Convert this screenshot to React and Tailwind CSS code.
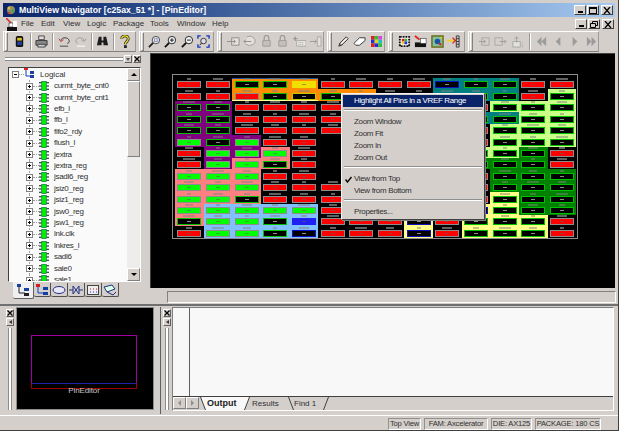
import { Fragment } from 'react';

const FONT = "font-['Liberation_Sans',Arial,sans-serif]";

const chipRows = [
  'nR nR oK oK oY nR nR nR nR tU tK tK nR nR',
  'nR nR oR oK oV oK oK nR nR tK tK tK nR lK',
  'pK pK nR nR nR nR nR nR nR nR nR lK lK lK',
  'pK pK nR nR nR nR nR nR nR nR tK tK lK lK',
  'pK pK nR nR nR nR nR nR nR nR nR lK lK lK',
  'pG pK pG nR nR nE nE nE nE nE nR lK lK lK',
  'nR pG pG sG nR nE nE nE nE nE lK lK dK nR',
  'nR pG sG sK nR nE nE nE nE nE dK dK dK nR',
  'sG sG sG nR nR nE nE nE nE nE nR dK dK dK',
  'sG sG sG nR nR nR nR nR nR nR nR dK dK dK',
  'sG sG sK nR nR nR nR nR nR nR nR yK dK dK',
  'sG bG bG bG bG nR nR nR nR nR yU yK dK dK',
  'sK bG bG bK bB nR nR nR yU nR yK yK yK nR',
  'nR bG bG bK bU nR nR nR yU nR yK yK yK nR',
];

const regionBg = {
  n: 'bg-black',
  o: 'bg-[#ff8c00]',
  p: 'bg-[#800080]',
  s: 'bg-[#ff8080]',
  b: 'bg-[#80c0ff]',
  t: 'bg-[#008080]',
  l: 'bg-[#ccff88]',
  d: 'bg-[#008000]',
  y: 'bg-[#ffff88]',
};

const pinStyle = {
  R: 'bg-[#ff0000] border-[#8c8c8c]',
  G: 'bg-[#00ff00] border-[#8c8c8c]',
  K: 'bg-black border-[#00c000]',
  U: 'bg-black border-[#1010c0]',
  V: 'bg-black border-[#c8c800]',
  Y: 'bg-[#f0e000] border-[#f0e000]',
  B: 'bg-[#2020f0] border-[#2020f0]',
};

const treeNets = [
  'curmt_byte_cnt0', 'curmt_byte_cnt1', 'efb_l', 'ffb_l', 'fifo2_rdy', 'flush_l', 'jextra',
  'jextra_reg', 'jsadl6_reg', 'jsiz0_reg', 'jsiz1_reg', 'jsw0_reg', 'jsw1_reg', 'lnk.clk',
  'lnkres_l', 'sadl6', 'sale0', 'sale1',
];

function Svg({ children, size = 13, view = 14 }) {
  return (
    <svg width={size} height={size} viewBox={`0 0 ${view} ${view}`} fill="none" className="shrink-0">
      {children}
    </svg>
  );
}

const Icons = {
  chip: () => (
    <Svg>
      <rect x="3" y="1" width="8" height="12" rx="2" fill="#111" />
      <rect x="4.5" y="3" width="5" height="3" fill="#e0c020" />
      <rect x="4.5" y="7" width="5" height="4" fill="#2040a0" />
    </Svg>
  ),
  printer: () => (
    <Svg>
      <path d="M4 1h6v4H4z" fill="#ddd" stroke="#444" />
      <path d="M1 6h12v5H1z" fill="#888" stroke="#333" />
      <path d="M3 10h8v3H3z" fill="#ccc" stroke="#444" />
    </Svg>
  ),
  undo: () => (
    <Svg>
      <path d="M3 6C4 2 11 2 12 6c.5 2-1 3-2 3" stroke="#333" strokeWidth="1" />
      <path d="M1 4l2 3 3-2" stroke="#c03030" />
      <path d="M2 12h9" stroke="#444" />
    </Svg>
  ),
  redo: () => (
    <Svg>
      <path d="M11 6C10 2 3 2 2 6c-.5 2 1 3 2 3" stroke="#9a9a9a" />
      <path d="M13 4l-2 3-3-2" stroke="#9a9a9a" />
      <path d="M3 12h9" stroke="#fff" />
    </Svg>
  ),
  binoculars: () => (
    <Svg>
      <path d="M3 2h3v4h2V2h3l2 9H8V8H6v3H1z" fill="#1c1c1c" />
    </Svg>
  ),
  help: () => (
    <Svg>
      <path d="M4 4c0-4 7-4 7 0 0 3-3 3-3 6" stroke="#222" strokeWidth="3" />
      <path d="M4 4c0-4 7-4 7 0 0 3-3 3-3 6" stroke="#f0e020" strokeWidth="1.4" />
      <rect x="6.5" y="11" width="3" height="3" fill="#222" />
    </Svg>
  ),
  zoomWindow: () => (
    <Svg>
      <circle cx="8.5" cy="5.5" r="4" fill="#e8e8e8" stroke="#444" />
      <path d="M5.5 8.5L1 13" stroke="#222" strokeWidth="2" />
      <path d="M7 4h3v3H7z" stroke="#2040a0" strokeDasharray="1 1" />
    </Svg>
  ),
  zoomIn: () => (
    <Svg>
      <circle cx="8.5" cy="5.5" r="4" fill="#f0f0f0" stroke="#222" />
      <path d="M5.5 8.5L1 13" stroke="#111" strokeWidth="2" />
      <path d="M6.5 5.5h4M8.5 3.5v4" stroke="#111" />
    </Svg>
  ),
  zoomOut: () => (
    <Svg>
      <circle cx="8.5" cy="5.5" r="4" fill="#f0f0f0" stroke="#222" />
      <path d="M5.5 8.5L1 13" stroke="#111" strokeWidth="2" />
      <path d="M6.5 5.5h4" stroke="#111" />
    </Svg>
  ),
  zoomFit: () => (
    <Svg>
      <path d="M1 4V1h3M10 1h3v3M13 10v3h-3M4 13H1v-3" stroke="#1030c0" strokeWidth="1.4" />
      <circle cx="7" cy="6.5" r="3" fill="#dde" stroke="#333" />
      <path d="M5 8.5L3 11" stroke="#222" />
    </Svg>
  ),
  boxIn: () => (
    <Svg>
      <path d="M5 3h8v8H5z" stroke="#8c8c8c" fill="#e4e0dc" />
      <path d="M0 7h9M7 5l2 2-2 2" stroke="#8c8c8c" />
    </Svg>
  ),
  boxOut: () => (
    <Svg>
      <path d="M4 2a6 5 0 1 1-1 8" stroke="#9c9c9c" fill="#e4e0dc" />
      <path d="M1 7h8M3 5L1 7l2 2" stroke="#8c8c8c" />
    </Svg>
  ),
  lock: () => (
    <Svg>
      <path d="M4.5 6V3a2.5 2.5 0 0 1 5 0v3" stroke="#9c9c9c" strokeWidth="1.4" />
      <path d="M3 6h8v6H3z" fill="#c4c0bc" stroke="#9c9c9c" />
    </Svg>
  ),
  plusGrid: () => (
    <Svg>
      <path d="M0 4h5M2.5 1.5v5" stroke="#8c8c8c" />
      <path d="M4 6h10v6H4z" fill="#ece8e4" stroke="#a8a8a8" />
      <path d="M6 8h1M8 8h1M10 8h1M6 10h1M8 10h1M10 10h1" stroke="#9c9c9c" />
    </Svg>
  ),
  arrowPanel: () => (
    <Svg>
      <path d="M1 7h7M6 5l2 2-2 2" stroke="#9c9c9c" />
      <path d="M9 2h4v10H9z" stroke="#a8a8a8" fill="#e4e0dc" />
    </Svg>
  ),
  pencil: () => (
    <Svg>
      <path d="M2 12l1-3 7-7 2 2-7 7z" fill="#f2f2f2" stroke="#222" />
      <path d="M3 9l2 2" stroke="#222" />
    </Svg>
  ),
  eraser: () => (
    <Svg>
      <path d="M1 9l6-6h6v3l-6 5H3z" fill="#fff" stroke="#333" />
    </Svg>
  ),
  palette: () => (
    <Svg view={6} size={11}>
      <path d="M0 0h2v2H0z" fill="#e02020" /><path d="M2 0h2v2H2z" fill="#30c030" /><path d="M4 0h2v2H4z" fill="#e040e0" />
      <path d="M0 2h2v2H0z" fill="#2030e0" /><path d="M2 2h2v2H2z" fill="#e0d020" /><path d="M4 2h2v2H4z" fill="#20c0c0" />
      <path d="M0 4h2v2H0z" fill="#e02020" /><path d="M2 4h2v2H2z" fill="#2030e0" /><path d="M4 4h2v2H4z" fill="#30c030" />
    </Svg>
  ),
  chipRing: () => (
    <Svg>
      <rect x="2" y="2" width="10" height="10" fill="#fff" stroke="#111" strokeWidth="2" strokeDasharray="2 1" />
      <rect x="4" y="4" width="3" height="3" fill="#e02020" />
      <rect x="7" y="4" width="3" height="3" fill="#30b030" />
      <rect x="4" y="7" width="3" height="3" fill="#e0d020" />
      <rect x="7" y="7" width="3" height="3" fill="#2030e0" />
    </Svg>
  ),
  pinRed: () => (
    <Svg>
      <path d="M1 1l5 4" stroke="#e02020" strokeWidth="2" />
      <rect x="1" y="8" width="12" height="5" fill="#111" />
      <rect x="7" y="4" width="6" height="5" fill="#fff" stroke="#333" strokeWidth=".6" />
    </Svg>
  ),
  greenBox: () => (
    <Svg>
      <rect x="1" y="1" width="12" height="12" fill="#80c0a0" stroke="#6a6a10" strokeWidth="1.5" />
      <circle cx="7" cy="7" r="3" fill="#2050a0" />
      <circle cx="10" cy="10" r="1.3" fill="#e02020" />
      <circle cx="11" cy="3" r="1" fill="#e0d020" />
    </Svg>
  ),
  yellowArrow: () => (
    <Svg>
      <path d="M0 6h8" stroke="#f0d020" strokeWidth="2" />
      <path d="M6 3l3 3-3 3" stroke="#e02020" strokeWidth="1.4" />
      <path d="M10 1h3v12h-3zM10 4h3M10 7h3M10 10h3" stroke="#333" />
    </Svg>
  ),
  dashIn: () => (
    <Svg>
      <path d="M4 3h8v8H4z" stroke="#a8a8a8" />
      <path d="M1 7h7M6 5l2 2-2 2" stroke="#9c9c9c" />
    </Svg>
  ),
  dashOut: () => (
    <Svg>
      <path d="M1 3h8v8H1z" stroke="#a8a8a8" />
      <path d="M6 7h7M11 5l2 2-2 2" stroke="#9c9c9c" />
    </Svg>
  ),
  tray: () => (
    <Svg>
      <path d="M2 7h8v6H2z" fill="#e4e0dc" stroke="#a8a8a8" />
      <path d="M6 8V2M4 4l2-2 2 2" stroke="#a0a0a0" />
      <path d="M12 8v6" stroke="#b8b8b8" />
    </Svg>
  ),
  first: () => (
    <Svg><path d="M7 2L2 7l5 5zM12 2L7 7l5 5z" fill="#9c9c9c" /></Svg>
  ),
  prev: () => (
    <Svg><path d="M9 2L4 7l5 5z" fill="#9c9c9c" /></Svg>
  ),
  next: () => (
    <Svg><path d="M5 2l5 5-5 5z" fill="#9c9c9c" /></Svg>
  ),
  last: () => (
    <Svg><path d="M2 2l5 5-5 5zM7 2l5 5-5 5z" fill="#9c9c9c" /></Svg>
  ),
};

function NetIcon() {
  return (
    <svg width="10" height="10" viewBox="0 0 11 11" className="shrink-0">
      <path d="M0 2h3M0 5.5h3M0 9h3M8 2h3M8 5.5h3M8 9h3" stroke="#111" strokeWidth="1.2" />
      <rect x="3" y="0.5" width="5" height="10" fill="#00f000" stroke="#064" strokeWidth=".7" />
    </svg>
  );
}

function LogicalIcon() {
  return (
    <svg width="11" height="12" viewBox="0 0 11 12" className="shrink-0">
      <path d="M2 1v8h5" stroke="#1040c0" fill="none" />
      <rect x="0" y="0" width="4" height="3" fill="#e02020" />
      <rect x="6" y="4" width="4" height="3" fill="#2040a0" />
      <rect x="6" y="8" width="4" height="3" fill="#2040a0" />
    </svg>
  );
}

function AppGlyph() {
  return (
    <svg width="12" height="12" viewBox="0 0 12 12" className="shrink-0">
      <circle cx="6" cy="6" r="4" fill="#909060" />
      <circle cx="4" cy="4" r="1.5" fill="#e0c040" />
      <circle cx="8" cy="7" r="1.5" fill="#40a060" />
      <circle cx="4" cy="9" r="1.3" fill="#c04040" />
    </svg>
  );
}

function MenuGlyph() {
  return (
    <svg width="12" height="13" viewBox="0 0 12 13" className="shrink-0">
      <path d="M0 0l5 5" stroke="#e02020" strokeWidth="1.5" />
      <rect x="3" y="5" width="4" height="4" fill="#fff" stroke="#222" strokeWidth=".6" />
      <rect x="1" y="9" width="10" height="4" fill="#111" />
      <rect x="7" y="3" width="4" height="6" fill="#fff" />
    </svg>
  );
}

function WinButton({ kind }) {
  return (
    <div className="flex h-[10px] w-[12px] items-center justify-center border border-t-white border-l-white border-r-[#404040] border-b-[#404040] bg-[#d4cfcb]">
      {kind === 'min' && <div className="mt-[4px] h-[2px] w-[5px] bg-black" />}
      {kind === 'max' && <div className="h-[7px] w-[8px] border border-t-2 border-black" />}
      {kind === 'restore' && (
        <svg width="8" height="7" viewBox="0 0 8 7"><path d="M2.5 2V.5h5v4H6M.5 2.5h5v4h-5z" stroke="#000" fill="none" /></svg>
      )}
      {kind === 'close' && (
        <svg width="8" height="7" viewBox="0 0 8 7"><path d="M1 0l6 7M7 0L1 7" stroke="#000" strokeWidth="1.3" /></svg>
      )}
    </div>
  );
}

function Band({ width, children }) {
  return (
    <div className={`flex h-[21px] items-center border-t border-l border-b border-r border-t-white border-l-white border-r-[#9a9a9a] border-b-[#808080] ${width}`}>
      <div className="ml-[1px] mr-[2px] h-[19px] w-[3px] shrink-0 border border-t-white border-l-white border-r-[#808080] border-b-[#808080]" />
      {children}
    </div>
  );
}

function TB({ icon, className = '' }) {
  const Ico = Icons[icon];
  return (
    <div className={`flex w-[16.5px] shrink-0 items-center justify-center ${className}`}>
      <Ico />
    </div>
  );
}

function Sep({ className = 'w-[6px]' }) {
  return (
    <div className={`flex shrink-0 justify-center ${className}`}>
      <div className="h-[17px] w-[2px] border-l border-r border-l-[#9a9a9a] border-r-white" />
    </div>
  );
}

function Toolbar() {
  return (
    <div className="flex h-[22px] shrink-0 gap-[3px] pl-[3px]">
      <Band width="w-[133px]">
        <TB icon="chip" className="ml-[1px]" />
        <Sep />
        <TB icon="printer" />
        <Sep />
        <TB icon="undo" />
        <TB icon="redo" />
        <Sep className="w-[5px]" />
        <TB icon="binoculars" />
        <Sep />
        <TB icon="help" />
      </Band>
      <Band width="w-[75px]">
        <TB icon="zoomWindow" />
        <TB icon="zoomIn" />
        <TB icon="zoomOut" />
        <TB icon="zoomFit" />
      </Band>
      <Band width="w-[107px]">
        <TB icon="boxIn" className="ml-[1px]" />
        <TB icon="boxOut" />
        <TB icon="lock" />
        <TB icon="lock" />
        <TB icon="plusGrid" />
        <TB icon="arrowPanel" />
      </Band>
      <Band width="w-[58px]">
        <TB icon="pencil" className="ml-[1px]" />
        <TB icon="eraser" />
        <TB icon="palette" />
      </Band>
      <Band width="w-[77px]">
        <TB icon="chipRing" className="ml-[1px]" />
        <TB icon="pinRed" />
        <TB icon="greenBox" />
        <TB icon="yellowArrow" />
      </Band>
      <Band width="w-[131px]">
        <TB icon="dashIn" className="ml-[1px]" />
        <TB icon="dashOut" />
        <TB icon="tray" />
        <Sep className="w-[8px]" />
        <TB icon="first" />
        <TB icon="prev" />
        <TB icon="next" />
        <TB icon="last" />
      </Band>
    </div>
  );
}

function Expander({ minus }) {
  return (
    <div className="relative z-10 flex h-[7px] w-[7px] shrink-0 items-center justify-center border border-[#808080] bg-white">
      <div className="h-px w-[3px] bg-black" />
      {!minus && <div className="absolute h-[3px] w-px bg-black" />}
    </div>
  );
}

function TreeRow({ label }) {
  return (
    <div className="relative flex h-[11.42px] items-center pl-[17px]">
      <div className="absolute inset-y-0 left-[20px] border-l border-dotted border-[#a0a0a0]" />
      <Expander />
      <div className="w-[6px] border-t border-dotted border-[#a0a0a0]" />
      <div className="mr-[5px]"><NetIcon /></div>
      <span className="whitespace-nowrap text-[8px] leading-none tracking-[-0.3px] text-[#303030]">{label}</span>
    </div>
  );
}

function ScrollArrow({ up }) {
  return (
    <div className="flex h-[13px] w-[13px] shrink-0 items-center justify-center border border-t-white border-l-white border-r-[#808080] border-b-[#808080] bg-[#d4cfcb]">
      <div className={`h-0 w-0 border-x-[3px] border-x-transparent ${up ? 'border-b-[3px] border-b-black' : 'border-t-[3px] border-t-black'}`} />
    </div>
  );
}

function GripButton({ children }) {
  return (
    <div className="flex h-[8px] w-[8px] items-center justify-center border border-t-white border-l-white border-r-[#606060] border-b-[#606060] bg-[#d4cfcb]">
      {children}
    </div>
  );
}

function CloseGlyph() {
  return <svg width="6" height="6" viewBox="0 0 6 6"><path d="M.5.5l5 5M5.5.5l-5 5" stroke="#000" strokeWidth="1.2" /></svg>;
}

function TreeTab({ active, children }) {
  return (
    <div className={active
      ? 'flex h-[17px] w-[21px] items-center justify-center rounded-b-[2px] border-r border-b border-r-[#606060] border-b-[#606060] bg-[#f0f0f0]'
      : 'mt-px flex h-[14px] w-[17px] items-center justify-center rounded-b-[2px] border-r border-b border-r-[#505050] border-b-[#505050] bg-[#d4cfcb]'}>
      {children}
    </div>
  );
}

function LeftDock() {
  return (
    <div className="flex w-[150px] shrink-0 flex-col pl-[3px]">
      <div className="flex h-[12px] items-center pl-[2px] pr-[2px]">
        <div className="h-[4px] w-[118px] border-y border-y-[#8c8c8c] bg-white" />
        <div className="ml-[1px] flex gap-[1px]">
          <GripButton><div className="h-0 w-0 border-x-[2.5px] border-t-[3px] border-x-transparent border-t-[#555]" /></GripButton>
          <GripButton><CloseGlyph /></GripButton>
        </div>
      </div>
      <div className="ml-[5px] mt-[2px] flex h-[215px] w-[133px] border border-t-[#404040] border-l-[#404040] border-r-white border-b-white">
        <div className="min-w-0 flex-1 overflow-hidden bg-[#fafafa] pt-px">
          <div className="relative flex h-[11.42px] items-center pl-[3px]">
            <Expander minus />
            <div className="w-[5px] border-t border-dotted border-[#a0a0a0]" />
            <div className="mr-[5px] mt-[-3px]"><LogicalIcon /></div>
            <span className="text-[8px] leading-none text-[#303030]">Logical</span>
          </div>
          {treeNets.map(net => <TreeRow key={net} label={net} />)}
        </div>
        <div className="flex w-[13px] shrink-0 flex-col bg-[#efedeb]">
          <ScrollArrow up />
          <div className="h-[76px] w-[13px] border border-t-white border-l-white border-r-[#808080] border-b-[#808080] bg-[#d4cfcb]" />
          <div className="flex-1" />
          <ScrollArrow />
        </div>
      </div>
      <div className="ml-[10px] flex h-[18px] items-start">
        <TreeTab active>
          <svg width="13" height="13" viewBox="0 0 13 13"><path d="M2 1v8h6" stroke="#222" fill="none" /><rect x="0" y="0" width="4" height="3" fill="#1040a0" /><rect x="7" y="4" width="5" height="3" fill="#1040a0" /><rect x="7" y="9" width="5" height="3" fill="#222" /></svg>
        </TreeTab>
        <TreeTab>
          <svg width="13" height="12" viewBox="0 0 13 12"><path d="M2 1v8h6" stroke="#1040c0" fill="none" /><rect x="0" y="0" width="4" height="3" fill="#d02020" /><rect x="7" y="3" width="5" height="3" fill="#1040a0" /><rect x="7" y="8" width="5" height="3" fill="#1040a0" /></svg>
        </TreeTab>
        <TreeTab>
          <svg width="14" height="10" viewBox="0 0 14 10"><ellipse cx="7" cy="5" rx="6" ry="3.5" fill="#e8e8f8" stroke="#203080" /></svg>
        </TreeTab>
        <TreeTab>
          <svg width="14" height="10" viewBox="0 0 14 10"><path d="M0 5h4M10 5h4M4 1l3 4-3 4zM10 1L7 5l3 4z" stroke="#203080" fill="none" /></svg>
        </TreeTab>
        <TreeTab>
          <svg width="12" height="10" viewBox="0 0 12 10"><rect x=".5" y=".5" width="11" height="9" fill="#eee" stroke="#444" /><path d="M3 4h1M6 4h1M9 4h1" stroke="#c02020" /><path d="M3 7h1M6 7h1M9 7h1" stroke="#2030c0" /></svg>
        </TreeTab>
        <TreeTab>
          <svg width="14" height="12" viewBox="0 0 14 12"><path d="M1 3l8-2 3 4-8 3z" fill="#dfe" stroke="#203080" /><path d="M4 8l6 3 3-3" stroke="#203080" fill="none" /></svg>
        </TreeTab>
      </div>
    </div>
  );
}

function PinCell({ code, row, col }) {
  const region = code[0];
  const pin = code[1];
  const labelWidth = 4 + ((row * 7 + col * 3) % 5) * 2;
  let edge = '';
  if (region === 'o' && row === 0) edge = 'shadow-[inset_0_1px_0_#2050a0]';
  if (region === 'o' && row === 1 && col <= 4) edge = 'shadow-[inset_0_-1px_0_#ffffa0]';
  const dark = pin === 'K' || pin === 'U' || pin === 'V';
  return (
    <div className={`flex flex-col items-center justify-end pb-px ${regionBg[region]} ${edge}`}>
      {pin !== 'E' && (
        <>
          <div className={`mb-px h-[2px] ${region === 'n' ? 'bg-[#606060]' : 'bg-[#808080]/50'}`} style={{ width: labelWidth }} />
          <div className={`flex h-[7px] w-[24px] items-center justify-center border ${pinStyle[pin]}`}>
            <div className={`h-px w-[4px] ${dark ? 'bg-[#8c8c8c]' : 'bg-[#606060]/60'}`} />
          </div>
        </>
      )}
    </div>
  );
}

function ChipCanvas() {
  return (
    <div className="ml-[21px] mt-[19px] h-[165px] w-[406px] border border-[#8c8c8c] bg-black pl-[2px] pt-[3px]">
      <div className="grid grid-cols-[repeat(14,28.67px)] auto-rows-[11.43px]">
        {chipRows.map((row, r) => (
          <Fragment key={r}>
            {row.split(' ').map((code, c) => (
              <PinCell key={c} code={code} row={r} col={c} />
            ))}
          </Fragment>
        ))}
      </div>
    </div>
  );
}

function ContextMenu() {
  const Item = ({ children, check }) => (
    <div className="relative flex h-[12px] items-center pl-[11px] text-[8px] leading-none tracking-[-0.35px] text-[#303030]">
      {check && (
        <svg width="7" height="7" viewBox="0 0 7 7" className="absolute left-[2px] top-[3px]">
          <path d="M.5 3.5l2 2.5 4-5" stroke="#000" strokeWidth="1.4" fill="none" />
        </svg>
      )}
      {children}
    </div>
  );
  const Divider = () => <div className="my-[2px] ml-[1px] mr-[1px] h-[2px] border-y border-t-[#909090] border-b-white" />;
  return (
    <div className={`absolute left-[191px] top-[40px] w-[144px] border border-t-[#f4f4f4] border-l-[#f4f4f4] border-r-[#404040] border-b-[#404040] bg-[#d4cfcb] p-px shadow-[1px_1px_0_#808080] ${FONT}`}>
      <div className="flex h-[12px] items-center whitespace-nowrap bg-[#0a246a] pl-[11px] text-[8px] leading-none tracking-[-0.35px] text-white">
        Highlight All Pins in a VREF Range
      </div>
      <Divider />
      <div className="h-[3px]" />
      <Item>Zoom Window</Item>
      <Item>Zoom Fit</Item>
      <Item>Zoom In</Item>
      <Item>Zoom Out</Item>
      <Divider />
      <div className="h-[3px]" />
      <Item check>View from Top</Item>
      <Item>View from Bottom</Item>
      <Divider />
      <div className="h-[3px]" />
      <Item>Properties...</Item>
    </div>
  );
}

function SideGrip() {
  return (
    <div className="flex w-[10px] shrink-0 flex-col items-center gap-px pt-[3px]">
      <GripButton><CloseGlyph /></GripButton>
      <GripButton><div className="h-0 w-0 border-y-[2.5px] border-r-[3px] border-y-transparent border-r-[#333]" /></GripButton>
      <div className="mt-px h-[82px] w-[4px] border-x border-x-[#8c8c8c] bg-white" />
    </div>
  );
}

function PreviewPane() {
  return (
    <div className="flex w-[159px] shrink-0 pl-[5px]">
      <SideGrip />
      <div className={`relative ml-px mt-px h-[103px] w-[138px] border border-[#8c8c8c] bg-black pl-[14px] pt-[27px] ${FONT}`}>
        <div className="relative h-[54px] w-[106px] border border-[#a000a0]">
          <div className="absolute inset-x-0 bottom-[4px] h-px bg-[#2020b0]" />
          <div className="absolute inset-x-[-1px] bottom-[-1px] h-[6px] border-x border-b border-[#a00000]" />
          <div className="absolute inset-x-0 bottom-[-7px] text-center text-[8px] leading-none tracking-[-0.1px] text-[#c8c8c8]">PinEditor</div>
        </div>
      </div>
    </div>
  );
}

function Slant({ back, fill = 'none' }) {
  return (
    <svg width="6" height="13" viewBox="0 0 6 13" className="shrink-0">
      {back
        ? <path d="M.5 0L5.5 13H6V0z" fill={fill} />
        : <path d="M5.5 0L.5 13H0V0z" fill={fill} />}
      <path d={back ? 'M.5 0l5 13' : 'M5.5 0l-5 13'} stroke="#404040" fill="none" />
    </svg>
  );
}

function OutputPane() {
  return (
    <div className="flex min-w-0 flex-1 pl-px">
      <SideGrip />
      <div className="mt-px flex h-[104px] w-[442px] flex-col border border-t-[#808080] border-l-[#808080] border-r-white border-b-white">
        <div className="flex min-h-0 flex-1 bg-[#f8f8f8]">
          <div className="w-[17px] border-r border-r-[#606060]" />
        </div>
        <div className={`flex h-[14px] items-start border-t border-t-[#404040] bg-[#d4cfcb] ${FONT}`}>
          <div className="flex">
            <div className="flex h-[12px] w-[13px] items-center justify-center border border-t-white border-l-white border-r-[#808080] border-b-[#808080]">
              <div className="h-0 w-0 border-y-[3px] border-r-[3px] border-y-transparent border-r-[#909090]" />
            </div>
            <div className="flex h-[12px] w-[13px] items-center justify-center border border-t-white border-l-white border-r-[#808080] border-b-[#808080]">
              <div className="h-0 w-0 border-y-[3px] border-l-[3px] border-y-transparent border-l-[#909090]" />
            </div>
          </div>
          <div className="ml-px flex">
            <Slant back fill="#f8f8f8" />
            <div className="flex h-[13px] w-[38px] items-center bg-[#f8f8f8] pl-px text-[9px] font-bold leading-none text-[#202020]">Output</div>
            <Slant fill="#f8f8f8" />
            <div className="flex h-[13px] w-[38px] items-center pl-[2px] text-[8px] leading-none text-[#303030]">Results</div>
            <Slant back />
            <div className="flex h-[13px] w-[29px] items-center text-[8px] leading-none text-[#303030]">Find 1</div>
            <Slant />
          </div>
        </div>
      </div>
    </div>
  );
}

function StatusPane({ width, children }) {
  return (
    <div className={`flex h-[12px] items-center justify-center whitespace-nowrap border border-t-[#909090] border-l-[#909090] border-r-white border-b-white text-[7.6px] leading-none tracking-[-0.2px] text-[#303030] ${width}`}>
      {children}
    </div>
  );
}

export default function App() {
  return (
    <div className={`flex h-[431px] w-[619px] flex-col overflow-hidden border-b border-r border-b-[#404040] border-r-[#404040] bg-[#d4cfcb] ${FONT}`}>
      <div className="mx-[3px] mt-[3px] flex h-[14px] shrink-0 items-center bg-gradient-to-r from-[#0a246a] to-[#a6caf0] pl-[2px] pr-[2px]">
        <AppGlyph />
        <span className="ml-[2px] whitespace-nowrap text-[8.7px] font-bold leading-none text-white">MultiView Navigator [c25ax_51 *] - [PinEditor]</span>
        <div className="ml-auto flex gap-px">
          <WinButton kind="min" />
          <WinButton kind="max" />
          <div className="ml-px"><WinButton kind="close" /></div>
        </div>
      </div>

      <div className="flex h-[14px] shrink-0 items-center pl-[6px] pr-[4px] text-[8px] leading-none text-[#303030]">
        <MenuGlyph />
        <span className="ml-[3px] w-[20px]">File</span>
        <span className="w-[22px]">Edit</span>
        <span className="w-[24px]">View</span>
        <span className="w-[26px]">Logic</span>
        <span className="w-[37px]">Package</span>
        <span className="w-[27px]">Tools</span>
        <span className="w-[35px]">Window</span>
        <span>Help</span>
        <div className="ml-auto flex gap-px">
          <WinButton kind="min" />
          <WinButton kind="restore" />
          <div className="ml-px"><WinButton kind="close" /></div>
        </div>
      </div>

      <Toolbar />

      <div className="flex h-[251px] shrink-0">
        <LeftDock />
        <div className="relative flex min-w-0 flex-1 flex-col">
          <div className="h-[235px] w-[465px] shrink-0 border-t border-l border-t-[#404040] border-l-[#404040] bg-black pt-px">
            <ChipCanvas />
          </div>
          <ContextMenu />
          <div className="ml-[17px] mt-[3px] h-[12px] w-[449px] border border-t-[#808080] border-l-[#808080] border-r-white border-b-white" />
        </div>
      </div>

      <div className="h-[2px] shrink-0 bg-[#707070]" />

      <div className="flex h-[109px] shrink-0">
        <PreviewPane />
        <div className="my-[1px] ml-[1px] w-[1px] bg-[#606060]" />
        <OutputPane />
      </div>

      <div className="flex h-[16px] shrink-0 items-center justify-end gap-[3px] border-t border-t-white pr-[17px]">
        <StatusPane width="w-[33px]">Top View</StatusPane>
        <StatusPane width="w-[64px]">FAM: Axcelerator</StatusPane>
        <StatusPane width="w-[41px]">DIE: AX125</StatusPane>
        <StatusPane width="w-[66px]">PACKAGE: 180 CS</StatusPane>
      </div>
    </div>
  );
}
